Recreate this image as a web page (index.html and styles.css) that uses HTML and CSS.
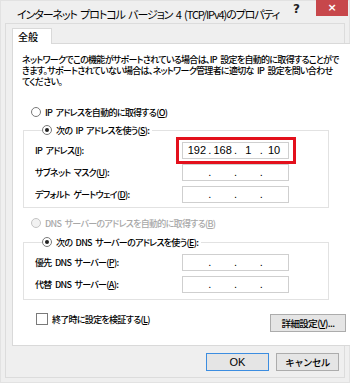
FILE: index.html
```html
<!DOCTYPE html>
<html lang="ja">
<head>
  <meta charset="UTF-8" />
  <title>インターネット プロトコル バージョン 4 (TCP/IPv4)のプロパティ</title>
  <link rel="stylesheet" href="styles.css">
</head>
<body>
  <div class="window">
    <div class="titlebar">
      <div class="title">インターネット プロトコル バージョン 4 (TCP/IPv4)のプロパティ</div>
      <div class="help">?</div>
      <div class="close">×</div>
    </div>

    <div class="frame">
      <div class="tab">全般</div>
      <div class="panel">
        <div class="desc">
          <div>ネットワークでこの機能がサポートされている場合は、IP 設定を自動的に取得することがで</div>
          <div>きます。サポートされていない場合は、ネットワーク管理者に適切な IP 設定を問い合わせ</div>
          <div>てください。</div>
        </div>

        <label class="option first"><span class="radio"></span>IP アドレスを自動的に取得する(<u>O</u>)</label>

        <fieldset class="group ip-group">
          <legend><label class="option"><span class="radio checked"></span>次の IP アドレスを使う(<u>S</u>):</label></legend>
          <div class="row">
            <span class="label">IP アドレス(<u>I</u>):</span>
            <div class="ip-field highlight">
              <span class="seg">192</span><span class="dot">.</span><span class="seg">168</span><span class="dot">.</span><span class="seg">1</span><span class="dot">.</span><span class="seg">10</span>
            </div>
          </div>
          <div class="row">
            <span class="label">サブネット マスク(<u>U</u>):</span>
            <div class="ip-field">
              <span class="seg"></span><span class="dot">.</span><span class="seg"></span><span class="dot">.</span><span class="seg"></span><span class="dot">.</span><span class="seg"></span>
            </div>
          </div>
          <div class="row">
            <span class="label">デフォルト ゲートウェイ(<u>D</u>):</span>
            <div class="ip-field">
              <span class="seg"></span><span class="dot">.</span><span class="seg"></span><span class="dot">.</span><span class="seg"></span><span class="dot">.</span><span class="seg"></span>
            </div>
          </div>
        </fieldset>

        <label class="option disabled dns-auto"><span class="radio"></span>DNS サーバーのアドレスを自動的に取得する(<u>B</u>)</label>

        <fieldset class="group dns-group">
          <legend><label class="option"><span class="radio checked"></span>次の DNS サーバーのアドレスを使う(<u>E</u>):</label></legend>
          <div class="row">
            <span class="label">優先 DNS サーバー(<u>P</u>):</span>
            <div class="ip-field">
              <span class="seg"></span><span class="dot">.</span><span class="seg"></span><span class="dot">.</span><span class="seg"></span><span class="dot">.</span><span class="seg"></span>
            </div>
          </div>
          <div class="row">
            <span class="label">代替 DNS サーバー(<u>A</u>):</span>
            <div class="ip-field">
              <span class="seg"></span><span class="dot">.</span><span class="seg"></span><span class="dot">.</span><span class="seg"></span><span class="dot">.</span><span class="seg"></span>
            </div>
          </div>
        </fieldset>

        <div class="bottom-row">
          <label class="option"><span class="checkbox"></span>終了時に設定を検証する(<u>L</u>)</label>
          <button class="btn">詳細設定(<u>V</u>)...</button>
        </div>
      </div>

      <div class="actions">
        <button class="btn default">OK</button>
        <button class="btn">キャンセル</button>
      </div>
    </div>
  </div>
</body>
</html>
```

FILE: styles.css
```css
body {
  margin: 0;
  background: #f0f0f0;
  font-family: "Noto Sans CJK JP", "Noto Sans", sans-serif;
  font-size: 9px;
  font-weight: 500;
  font-feature-settings: "palt";
  letter-spacing: -0.7px;
  word-spacing: 2px;
  color: #000;
}
.window {
  width: 350px;
  height: 383px;
  box-sizing: border-box;
  background: #efefef;
  border: 1px solid #e2e2e2;
  display: flex;
  flex-direction: column;
}
.titlebar {
  height: 22px;
  display: flex;
  align-items: flex-start;
}
.title {
  flex: 1;
  padding: 5px 0 0 16px;
  font-size: 11px;
  font-weight: 400;
  letter-spacing: -1.1px;
  word-spacing: 2px;
  white-space: nowrap;
}
.help {
  width: 14px;
  padding-top: 1px;
  font-family: "DejaVu Sans", sans-serif;
  font-weight: bold;
  font-size: 12px;
  letter-spacing: 0;
  color: #222;
}
.close {
  width: 32px;
  height: 16px;
  margin: -1px 1px 0 9px;
  background: #c7474b;
  color: #fff;
  font-family: "DejaVu Sans", sans-serif;
  font-weight: bold;
  font-size: 11px;
  letter-spacing: 0;
  line-height: 16px;
  text-align: center;
}
.frame {
  margin: 0 4px 4px 4px;
  flex: 1;
  border: 1px solid #dcdcdc;
  padding: 4px 5px 0 5px;
}
.tab {
  width: 33px;
  height: 15px;
  border: 1px solid #d9d9d9;
  border-bottom: none;
  background: #fff;
  padding-left: 5px;
  font-size: 10px;
  letter-spacing: 0;
  line-height: 16px;
  position: relative;
  z-index: 1;
  margin: 0 0 -1px 1px;
}
.panel {
  width: 325px;
  height: 301px;
  border: 1px solid #d9d9d9;
  background: #fff;
  margin-left: 1px;
  padding: 0 10px;
}
.desc {
  margin: 10px 0 0 -1px;
  line-height: 11px;
  white-space: nowrap;
}
.option {
  display: flex;
  align-items: center;
  height: 14px;
  white-space: nowrap;
}
.option.first {
  margin: 18px 0 0 8px;
}
.radio {
  width: 8px;
  height: 8px;
  border: 1px solid #7a7a7a;
  border-radius: 50%;
  background: #fff;
  margin-right: 4px;
  position: relative;
}
.radio.checked::after {
  content: "";
  position: absolute;
  left: 2px;
  top: 2px;
  width: 4px;
  height: 4px;
  border-radius: 50%;
  background: #222;
}
.disabled {
  color: #a8a8a8;
}
.disabled .radio {
  border-color: #c4c4c4;
  background: #f2f2f2;
}
.checkbox {
  width: 10px;
  height: 10px;
  border: 1px solid #7a7a7a;
  background: #fff;
  margin-right: 4px;
}
.group {
  margin: 0;
  padding: 2px 0 2px 11px;
  width: 293px;
  border: 1px solid #e2e2e2;
}
.group legend {
  padding: 0 3px 0 0;
  margin-left: 7px;
}
.ip-group {
  margin-top: 4px;
}
.dns-auto {
  margin: 8px 0 0 8px;
}
.dns-group {
  margin-top: 5px;
  padding-bottom: 4px;
}
.row {
  display: flex;
  align-items: center;
  height: 22px;
}
.label {
  width: 147px;
  white-space: nowrap;
}
.ip-field {
  height: 17px;
  border: 1px solid #cfcfcf;
  background: #fff;
  display: flex;
  align-items: center;
  padding: 0 3px;
  box-sizing: border-box;
  width: 107px;
  position: relative;
  font-family: "Liberation Sans", sans-serif;
  font-weight: 400;
  letter-spacing: 0;
  font-size: 11px;
}
.seg {
  flex: 1;
  text-align: center;
}
.dot {
  width: 4px;
  text-align: center;
}
.highlight::before {
  content: "";
  position: absolute;
  left: -7px;
  top: -6px;
  right: -8px;
  bottom: -6px;
  border: 3px solid #e3101c;
}
.bottom-row {
  display: flex;
  justify-content: space-between;
  align-items: flex-start;
  margin: 14px 2px 0 13px;
}
.bottom-row .option {
  margin-top: -2px;
}
.btn {
  font-family: inherit;
  font-size: 9.5px;
  font-weight: 500;
  letter-spacing: -0.6px;
  height: 18px;
  padding: 0 4px;
  background: #e5e5e5;
  border: 1px solid #acacac;
  color: #000;
  white-space: nowrap;
}
.bottom-row .btn {
  width: 76px;
}
.actions {
  display: flex;
  justify-content: flex-end;
  gap: 7px;
  margin-top: 7px;
}
.actions .btn {
  width: 63px;
}
.btn.default {
  border-color: #3c8de0;
  font-family: "Liberation Sans", sans-serif;
  font-size: 11px;
  font-weight: 400;
  letter-spacing: 0;
}
```
